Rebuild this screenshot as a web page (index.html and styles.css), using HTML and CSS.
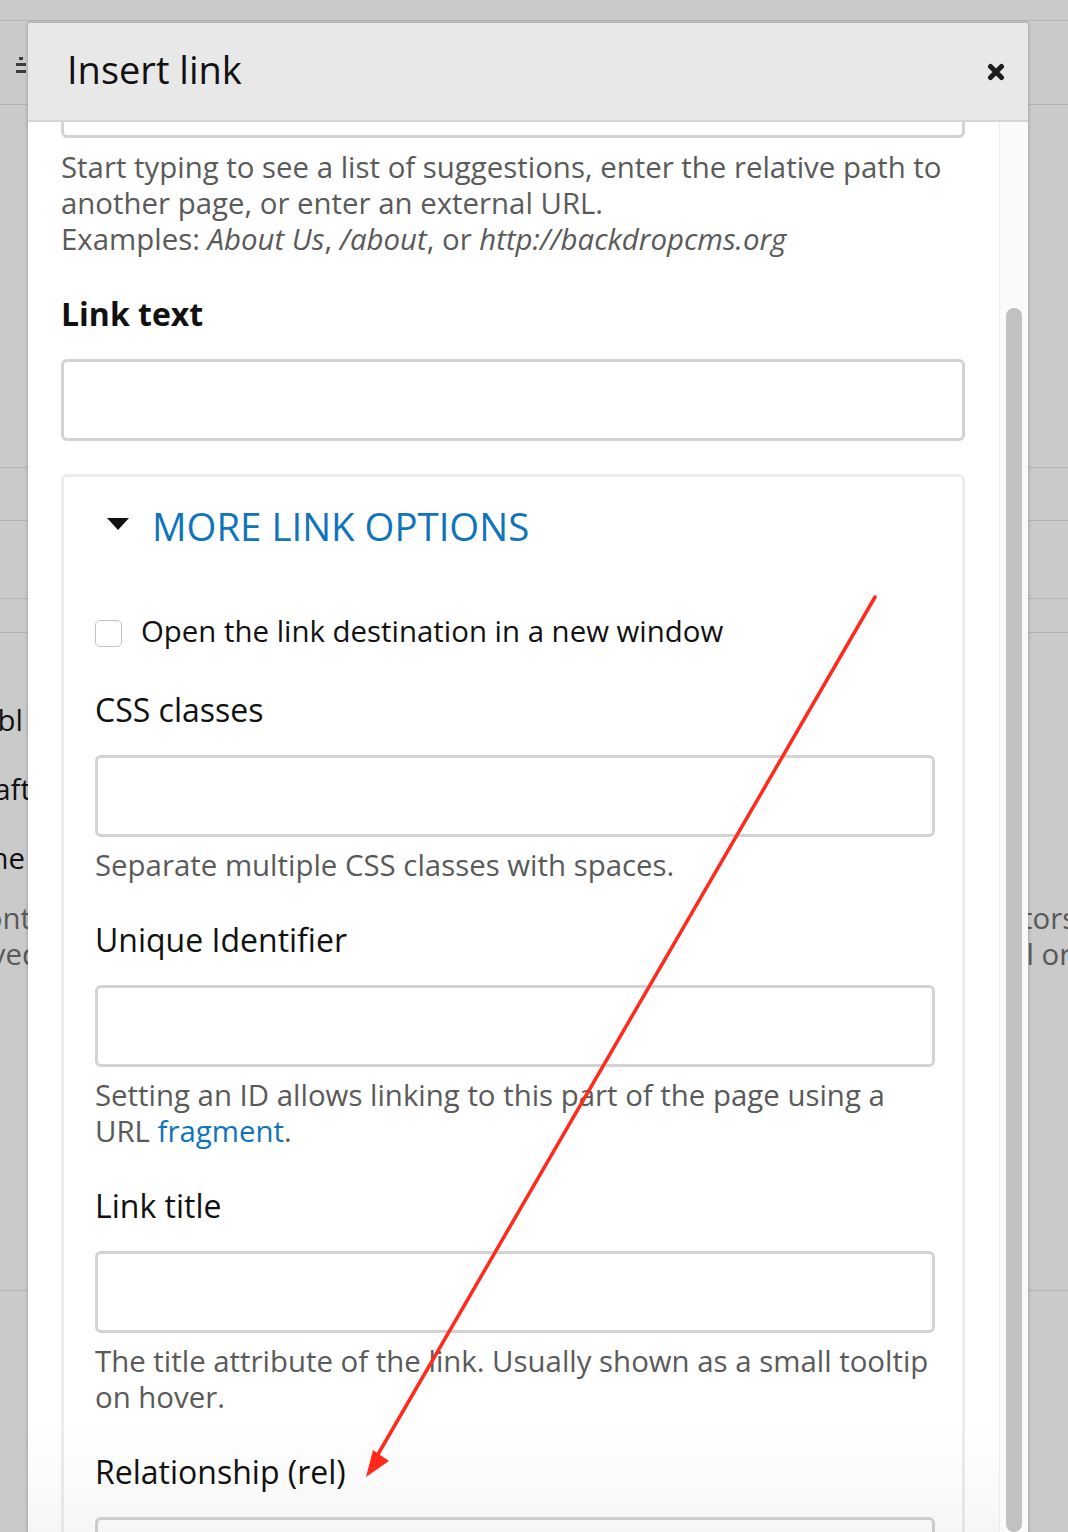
FILE: index.html
```html
<!DOCTYPE html>
<html lang="en">
<head>
<meta charset="utf-8">
<title>Insert link</title>
<link rel="stylesheet" href="styles.css">
</head>
<body>
<div class="page">
  <div class="bg-row bg-top"></div>
  <div class="bg-row bg-r1">
    <svg class="handle" width="10" height="18" viewBox="0 0 10 18"><rect x="3" y="0" width="4" height="3" fill="#3c3c3c"/><rect x="0" y="6" width="10" height="3" fill="#3c3c3c"/><rect x="0" y="13" width="10" height="3" fill="#3c3c3c"/></svg>
  </div>
  <div class="bg-row bg-r2"></div>
  <div class="bg-row bg-r3"></div>
  <div class="bg-row bg-r4"></div>
  <div class="bg-row bg-r5"></div>
  <div class="bg-row bg-r6">
    <div class="bg-line"><span class="bg-left dark w23">Enabl</span></div>
    <div class="bg-line"><span class="bg-left dark w31">Draft</span></div>
    <div class="bg-line"><span class="bg-left dark w25">The</span></div>
    <div class="bg-para">
      <div class="bg-line tight"><span class="bg-left w31">Cont</span><span class="bg-right ind6">tors</span></div>
      <div class="bg-line tight"><span class="bg-left w40">saved</span><span class="bg-right">ll or</span></div>
    </div>
  </div>
  <div class="bg-row bg-r7"></div>

  <div class="dialog" role="dialog" aria-labelledby="dlg-title">
    <div class="dialog-header">
      <h1 class="dialog-title" id="dlg-title">Insert link</h1>
      <svg class="close" width="18" height="18" viewBox="0 0 18 18" aria-label="Close"><path d="M3.5 3.5 L14.5 14.5 M14.5 3.5 L3.5 14.5" stroke="#1e1e1e" stroke-width="5" stroke-linecap="round"/></svg>
    </div>
    <div class="dialog-body">
      <div class="dialog-content">
        <div class="input url-input"></div>
        <div class="description first-desc">Start typing to see a list of suggestions, enter the relative path to another page, or enter an external URL.<br>Examples: <em>About Us</em>, <em>/about</em>, or <em>http://backdropcms.org</em></div>

        <div class="label bold">Link text</div>
        <div class="input"></div>

        <div class="fieldset">
          <div class="fieldset-title"><span class="triangle"></span><span>MORE LINK OPTIONS</span></div>
          <div class="check-row"><span class="checkbox"></span><span>Open the link destination in a new window</span></div>

          <div class="label first">CSS classes</div>
          <div class="input"></div>
          <div class="description">Separate multiple CSS classes with spaces.</div>

          <div class="label">Unique Identifier</div>
          <div class="input"></div>
          <div class="description">Setting an ID allows linking to this part of the page using a URL <a href="#" class="link">fragment</a>.</div>

          <div class="label">Link title</div>
          <div class="input"></div>
          <div class="description">The title attribute of the link. Usually shown as a small tooltip on hover.</div>

          <div class="label">Relationship (rel)</div>
          <div class="input"></div>
        </div>
        <div class="fade"></div>
      </div>
      <div class="scrollbar"><div class="thumb"></div></div>
    </div>
  </div>

  <svg class="arrow" width="1068" height="1532" viewBox="0 0 1068 1532">
    <line x1="875" y1="597" x2="377" y2="1456" stroke="#ff2a1c" stroke-width="3.5" stroke-linecap="round"/>
    <polygon points="366,1477 373,1450 389,1461" fill="#ff2a1c"/>
  </svg>
</div>
</body>
</html>
```

FILE: styles.css
```css
* { box-sizing: border-box; }
html, body { margin: 0; padding: 0; }
body {
  width: 1068px;
  height: 1532px;
  overflow: hidden;
  font-family: "Open Sans", "Noto Sans", sans-serif;
}
.page {
  position: relative;
  width: 1068px;
  height: 1532px;
  background: #cacaca;
  overflow: hidden;
}
.bg-row { border-bottom: 1px solid #b2b2b2; }
.bg-top { height: 21px; background: #c9c9c9; }
.bg-r1 { height: 84px; padding: 36px 0 0 16px; }
.handle { display: block; }
.bg-r2 { height: 363px; }
.bg-r3 { height: 53px; }
.bg-r4 { height: 78px; }
.bg-r5 { height: 34px; }
.bg-r6 { height: 658px; padding-top: 69px; }
.bg-r7 { border-bottom: 0; height: 300px; }
.bg-line {
  display: flex;
  height: 36px;
  margin-bottom: 33px;
  font-size: 29.4px;
  line-height: 36px;
  color: #585858;
}
.bg-line.tight { margin-bottom: 0; }
.bg-para { margin-top: -9px; }
.bg-left {
  flex: none;
  overflow: hidden;
  white-space: nowrap;
  direction: rtl;
  text-align: right;
}
.bg-left.dark { color: #111; }
.w23 { width: 23px; }
.w25 { width: 25px; }
.w31 { width: 31px; }
.w40 { width: 40px; }
.bg-right {
  margin-left: auto;
  width: 40px;
  overflow: hidden;
  white-space: nowrap;
  text-indent: -9px;
}
.bg-right.ind6 { text-indent: -6px; }

/* dialog */
.dialog {
  position: absolute;
  left: 28px;
  top: 23px;
  width: 1000px;
  height: 1509px;
  background: #fff;
  border-radius: 3px 3px 0 0;
  box-shadow: 0 0 3px 1px rgba(0,0,0,0.18);
  display: flex;
  flex-direction: column;
}
.dialog-header {
  height: 99px;
  flex: none;
  background: #e8e8e8;
  border-bottom: 2px solid #d5d5d5;
  border-radius: 3px 3px 0 0;
  display: flex;
  align-items: center;
  justify-content: space-between;
  padding: 0 23px 0 39px;
}
.dialog-title {
  margin: 0 0 6px 0;
  font-size: 38px;
  font-weight: 400;
  line-height: 1;
  color: #111;
}
.close { display: block; }
.dialog-body {
  flex: 1;
  min-height: 0;
  display: flex;
}
.dialog-content {
  flex: 1;
  min-width: 0;
  position: relative;
  overflow: hidden;
  padding: 0 34px 0 33px;
}
.scrollbar {
  width: 29px;
  flex: none;
  background: #fafafa;
  border-left: 1px solid #ececec;
  padding: 186px 6px 0 6px;
  display: flex;
  flex-direction: column;
}
.thumb {
  flex: 1;
  width: 16px;
  border-radius: 8px;
  background: #c1c1c1;
}

.input {
  display: block;
  width: 100%;
  height: 82px;
  border: 3px solid #d3d3d3;
  border-radius: 6px;
  background: #fff;
}
.url-input { margin-top: -66px; }
.description {
  margin-top: 10px;
  font-size: 29.4px;
  line-height: 36px;
  color: #5a5a5a;
}
.description.first-desc { margin-top: 11px; }
.description em { font-style: italic; }
.link { color: #0f74bb; text-decoration: none; }
.label {
  margin-top: 37px;
  margin-bottom: 25px;
  font-size: 32px;
  line-height: 40px;
  color: #111;
}
.label.bold { font-weight: 700; }
.label.first { margin-top: 41px; }

.fieldset {
  margin-top: 33px;
  border: 3px solid #ececec;
  border-bottom: 0;
  border-radius: 6px 6px 0 0;
  padding: 25px 27px 200px 31px;
}
.fieldset-title {
  display: flex;
  align-items: center;
  margin-left: 12px;
  font-size: 38.4px;
  line-height: 48px;
  color: #0f74bb;
}
.triangle {
  width: 0;
  height: 0;
  border-left: 11.5px solid transparent;
  border-right: 11.5px solid transparent;
  border-top: 12px solid #111;
  margin-right: 23px;
  margin-bottom: 4px;
}
.check-row {
  display: flex;
  align-items: center;
  margin-top: 63px;
  font-size: 29.4px;
  line-height: 36px;
  color: #111;
}
.checkbox {
  width: 27px;
  height: 27px;
  border: 1.5px solid #c3c3c3;
  border-radius: 5px;
  background: #fff;
  margin-right: 19px;
  margin-top: 4px;
}
.fade {
  position: absolute;
  left: 0;
  right: 0;
  bottom: 0;
  height: 110px;
  background: linear-gradient(to bottom, rgba(0,0,0,0), rgba(0,0,0,0.035));
  pointer-events: none;
}
.arrow {
  position: absolute;
  left: 0;
  top: 0;
  pointer-events: none;
}
```
